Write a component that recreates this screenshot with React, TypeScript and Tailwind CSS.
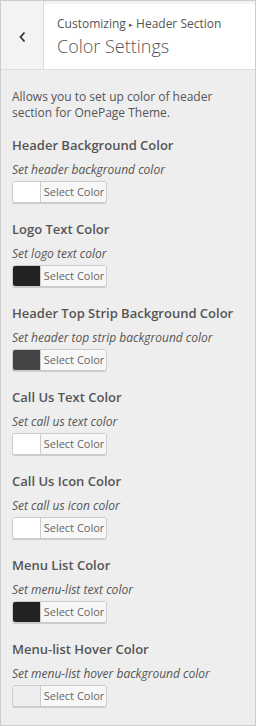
const controls = [
  { title: "Header Background Color", desc: "Set header background color", swatch: "bg-white" },
  { title: "Logo Text Color", desc: "Set logo text color", swatch: "bg-[#222]" },
  { title: "Header Top Strip Background Color", desc: "Set header top strip background color", swatch: "bg-[#444]" },
  { title: "Call Us Text Color", desc: "Set call us text color", swatch: "bg-white" },
  { title: "Call Us Icon Color", desc: "Set call us icon color", swatch: "bg-white" },
  { title: "Menu List Color", desc: "Set menu-list text color", swatch: "bg-[#222]" },
  { title: "Menu-list Hover Color", desc: "Set menu-list hover background color", swatch: "bg-[#eee]" },
];

function ColorButton({ swatch }: { swatch: string }) {
  return (
    <button
      type="button"
      className="flex h-[22px] w-[95px] overflow-hidden rounded-[3px] border border-[#ccc] bg-[#f7f7f7] shadow-[0_1px_0_#ccc]"
    >
      <span className={`h-full w-[27px] ${swatch}`} />
      <span className="flex h-full flex-1 items-center justify-center border-l border-[#ccc] bg-[#f7f7f7] pl-[1px] text-[11px] text-[#666]">
        Select Color
      </span>
    </button>
  );
}

export default function App() {
  return (
    <div className="flex h-[726px] w-[256px] flex-col border border-[#ccc] bg-[#eee] font-['Open_Sans',sans-serif] text-[#555]">
      <div className="flex h-[69px] shrink-0 border-b border-[#ddd] bg-[#f3f3f3]">
        <button
          type="button"
          className="flex w-[43px] items-center justify-center border-r border-[#ddd] bg-[#f3f3f3]"
        >
          <svg width="10" height="14" viewBox="0 0 10 14" className="mt-[4px] ml-[2px]">
            <polyline points="6.5,2.5 2.5,7 6.5,11.5" fill="none" stroke="#333" strokeWidth="1.8" />
          </svg>
        </button>
        <div className="mt-[3px] flex flex-1 flex-col bg-white pl-[13px] pt-[11px]">
          <span className="text-[12px] leading-[17px]">
            Customizing <span className="text-[7px] align-[1px]">▸</span> Header Section
          </span>
          <h3 className="text-[18px] font-light leading-[26px]">Color Settings</h3>
        </div>
      </div>

      <div className="px-[11px] pt-[19px]">
        <p className="mb-[14px] text-[12px] leading-[16px]">
          Allows you to set up color of header section for OnePage Theme.
        </p>

        {controls.map((c) => (
          <div key={c.title} className="mb-[16px]">
            <div className="mb-[7px] text-[13px] font-semibold leading-[20px]">{c.title}</div>
            <div className="mb-[3px] text-[12px] italic leading-[16px]">{c.desc}</div>
            <ColorButton swatch={c.swatch} />
          </div>
        ))}
      </div>
    </div>
  );
}
